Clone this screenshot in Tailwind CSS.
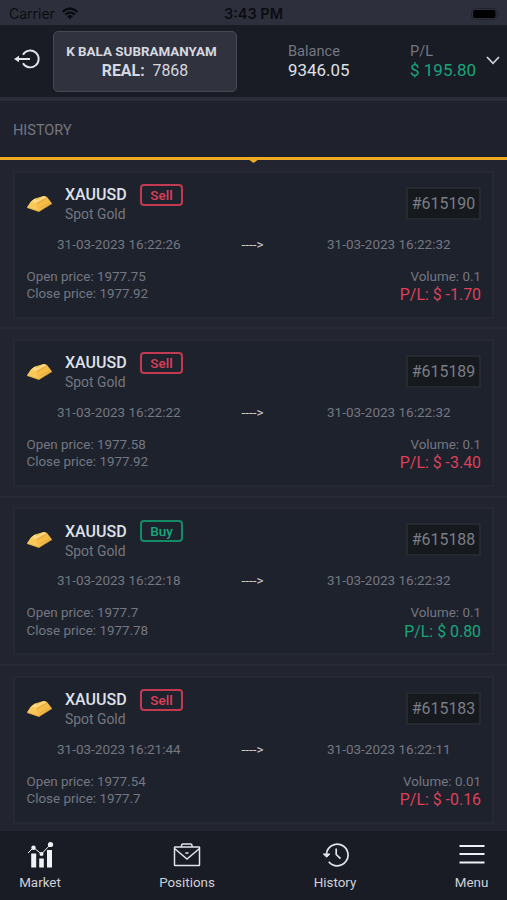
<!DOCTYPE html>
<html lang="en">
<head>
<meta charset="utf-8">
<title>History</title>
<script src="https://cdn.jsdelivr.net/npm/@tailwindcss/browser@4"></script>
</head>
<body class="bg-[#222530]">
<div class="flex h-[900px] w-[507px] flex-col overflow-hidden bg-[#222530] font-['Roboto',sans-serif] text-[#747780]">
  <div class="grid h-[25px] shrink-0 grid-cols-3 items-center bg-[#2d303c] pt-[2px] font-['Inter',sans-serif] text-[#0b0c11]">
    <div class="flex items-center gap-[6px] pl-[9px]">
      <span class="text-[14px] leading-4">Carrier</span>
      <svg class="h-[13px] w-[18px]" viewBox="0 0 18 14" fill="none" stroke="currentColor" stroke-width="2.5"><path d="M1 5.2Q9-2 17 5.2M3.9 8.2Q9 3.5 14.1 8.2"/><path d="M9 13.2 5.9 10Q9 7.5 12.1 10Z" fill="currentColor" stroke="none"/></svg>
    </div>
    <span class="text-center text-[14.5px] leading-4 font-semibold whitespace-nowrap">3:43 PM</span>
    <div class="flex justify-end pr-[7px]">
      <svg class="h-[12px] w-[29px]" viewBox="0 0 29 12"><rect x=".5" y=".5" width="25.5" height="11" rx="3.5" fill="none" stroke="#22242d"/><rect x="2" y="2" width="22.5" height="8" rx="2" fill="#000"/><path d="M27.3 4v4q1.5-2 0-4" fill="#1c1e26"/></svg>
    </div>
  </div>

  <header class="flex h-[76px] shrink-0 border-b-4 border-[#2a2d38] bg-[#191b25]">
    <svg class="mt-[23px] ml-[14px] h-[22px] w-[27px] shrink-0" viewBox="0 0 27 22" fill="none" stroke="#e4e5ea" stroke-width="1.9"><path d="M9 6.700A8.400 8.400 0 1 1 9 15.200M3 11H16"/><path d="M0 11 5 7.700V14.300Z" fill="#e4e5ea" stroke="none"/></svg>
    <div class="mt-[6px] ml-[12px] h-[61px] w-[184px] shrink-0 rounded-[5px] border border-[#464853] bg-[#30323d] pt-[11px] text-center text-[#d6d8e0]">
      <div class="pr-[7px] text-[13.4px] leading-[18px] font-bold whitespace-nowrap">K BALA SUBRAMANYAM</div>
      <div class="text-[15.900px] leading-[19px] whitespace-pre"><b>REAL:</b>  7868</div>
    </div>
    <div class="mt-[18px] ml-[51px] w-[122px] shrink-0">
      <div class="text-[14.600px] leading-[17px]">Balance</div>
      <div class="text-[16.900px] leading-[20px] text-[#dfe1e8]">9346.05</div>
    </div>
    <div class="mt-[18px] w-[76px] shrink-0">
      <div class="text-[14.600px] leading-[17px]">P/L</div>
      <div class="text-[17px] leading-[20px] whitespace-nowrap text-[#1aa67b]">$ 195.80</div>
    </div>
    <svg class="mt-[31px] h-[9px] w-[14px] shrink-0" viewBox="0 0 14 9" fill="none" stroke="#d2d4da" stroke-width="1.7"><path d="M1 1 7 7.3 13 1"/></svg>
  </header>

  <div class="relative h-[59px] shrink-0 border-b-[3px] border-[#f0ab22] bg-[#1f222d] pt-[21px] pl-[13px]">
    <h1 class="text-[14.5px] leading-[18px]">HISTORY</h1>
    <svg class="absolute top-[58px] left-[248px] h-[4px] w-[11px]" viewBox="0 0 11 4"><path d="M0 0H11L5.5 4Z" fill="#f0ab22"/></svg>
  </div>

  <main id="trades" class="min-h-0 flex-1 overflow-hidden pt-px"></main>

  <nav class="grid h-[69px] shrink-0 grid-cols-[80px_214px_82px_131px] bg-[#191b25] text-[13.4px] leading-[16px] text-[#cfd1d8]">
    <div class="flex flex-col items-center pt-[9px]">
      <svg class="h-[28px] w-[28px]" viewBox="0 0 28 28" fill="#f1f2f6"><path d="M5.200 13.500h5V27.500h-5zM13.200 18.500h4.600v9h-4.600zM21 10h5v17.500h-5z"/><path d="M2 13 7.500 7.500 15.500 14 24.500 4.500" fill="none" stroke="#f1f2f6" stroke-width="1"/><circle cx="7.500" cy="7.800" r="2.200"/><circle cx="15.500" cy="14" r="2"/><circle cx="24.500" cy="4.500" r="2.600"/></svg>
      <span class="mt-[7px]">Market</span>
    </div>
    <div class="flex flex-col items-center pt-[9px]">
      <svg class="h-[28px] w-[28px]" viewBox="0 0 28 28" fill="none" stroke="#e2e4ea" stroke-width="1.500"><rect x="1.500" y="7" width="25" height="18.500" rx=".5"/><path d="M8.500 7V5.500Q8.500 4 10 4H17.500Q19 4 19 5.500V7M1.500 8.500 14 19 26.500 8.500"/><path d="M12.300 12.300h3.200v1.500h-3.200z" fill="#e2e4ea" stroke="none"/></svg>
      <span class="mt-[7px]">Positions</span>
    </div>
    <div class="flex flex-col items-center pt-[9px]">
      <svg class="h-[28px] w-[28px]" viewBox="0 0 28 28" fill="none" stroke="#e2e4ea" stroke-width="1.700"><path d="M5.500 14A10.800 10.800 0 1 1 7.800 21.700M15.200 8.500V14.500L19.500 18.700"/><path d="M2.300 14H9L5.700 17.200Z" fill="#e2e4ea" stroke-width="1"/></svg>
      <span class="mt-[7px]">History</span>
    </div>
    <div class="flex flex-col items-center pt-[9px] pl-[60px]">
      <svg class="h-[28px] w-[28px]" viewBox="0 0 28 28" fill="#eef0f5"><path d="M1.500 5h25v2h-25zM1.500 13h25v2h-25zM1.500 21.500h25v2h-25z"/></svg>
      <span class="mt-[7px]">Menu</span>
    </div>
  </nav>
</div>
<script>
const trades = [
  { id: 615190, side: 'Sell', opened: '31-03-2023 16:22:26', closed: '31-03-2023 16:22:32', open: '1977.75', close: '1977.92', volume: '0.1', pl: '-1.70' },
  { id: 615189, side: 'Sell', opened: '31-03-2023 16:22:22', closed: '31-03-2023 16:22:32', open: '1977.58', close: '1977.92', volume: '0.1', pl: '-3.40' },
  { id: 615188, side: 'Buy', opened: '31-03-2023 16:22:18', closed: '31-03-2023 16:22:32', open: '1977.7', close: '1977.78', volume: '0.1', pl: '0.80' },
  { id: 615183, side: 'Sell', opened: '31-03-2023 16:21:44', closed: '31-03-2023 16:22:11', open: '1977.54', close: '1977.7', volume: '0.01', pl: '-0.16' },
];
document.getElementById('trades').innerHTML = trades.map(t => {
  const sideColor = t.side === 'Buy' ? 'text-[#1aa67b] border-[#158a67]' : 'text-[#df4058] border-[#c23a50]';
  const plColor = t.pl.startsWith('-') ? 'text-[#df4058]' : 'text-[#1aa67b]';
  return `
  <section class="h-[168.4px] border-b-2 border-[#282b36] px-[13px] pt-[9.500px]">
    <article class="h-[148px] border-2 border-[#262934] bg-[#1e222d] pr-[11px] pl-[11px]">
      <div class="flex h-[58px]">
        <svg class="mt-[22px] h-[17px] w-[27px]" viewBox="0 0 27 17"><path d="M1 12.500 5 6.500 9 3.500 17.500 1 21 2 26 8.500 20 12 13 16.500Z" fill="#f5bd48"/><path d="M1 12.500 5 6.500 10 8 13 16.500Z" fill="#f9c75c"/><path d="M5 6.500 9 3.500 11 5 17.500 1 21 2 10 8Z" fill="#ffd980"/><path d="M11 8.500 21 3M14 13 24 7.500M1 12.500 13 16.500 26 8.500" fill="none" stroke="#e0a238" stroke-width=".8"/></svg>
        <div class="mt-[12.500px] ml-[12px] w-[75px]">
          <div class="text-[16px] leading-[20px] font-medium text-[#dfe1e8]">XAUUSD</div>
          <div class="text-[13.900px] leading-[18px]">Spot Gold</div>
        </div>
        <div class="mt-[11px] h-[22px] w-[43px] rounded-[4px] border-2 ${sideColor} text-center text-[13.500px] leading-[18px] font-medium">${t.side}</div>
        <div class="mt-[14px] ml-auto h-[33px] w-[75px] border-2 border-[#262931] bg-[#16191e] text-center text-[15.900px] leading-[29px] text-[#7b7e86]">#${t.id}</div>
      </div>
      <div class="grid h-[26px] grid-cols-[185px_83px_1fr] items-center text-[13.500px] leading-[18px] whitespace-nowrap">
        <span class="pl-[31px]">${t.opened}</span>
        <span class="pl-[30.500px] text-[#d0d2d9]">----&gt;</span>
        <span class="pl-[33px]">${t.closed}</span>
      </div>
      <div class="mt-[11px] flex justify-between text-[13.400px] leading-[17.500px]">
        <div class="pl-[.5px]"><div>Open price: ${t.open}</div><div>Close price: ${t.close}</div></div>
        <div class="text-right"><div>Volume: ${t.volume}</div><div class="text-[15.900px] leading-[20.500px] ${plColor}">P/L: $ ${t.pl}</div></div>
      </div>
    </article>
  </section>`;
}).join('');
</script>
</body>
</html>
